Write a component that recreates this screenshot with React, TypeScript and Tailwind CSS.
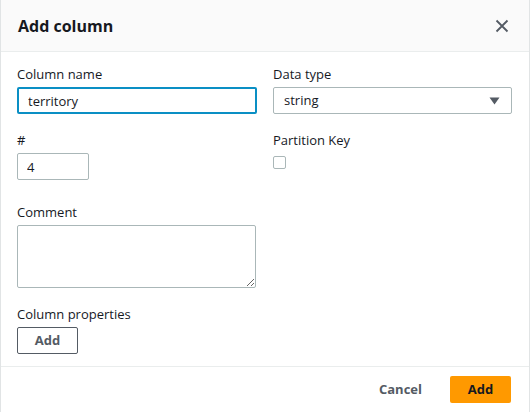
import React, { useState } from 'react';

const font = { fontFamily: '"Open Sans", "Noto Sans", Arial, sans-serif' };

const Label: React.FC<{ children: React.ReactNode }> = ({ children }) => (
  <div className="text-[13px] leading-[18px] text-[#16191f] mb-[4px]">{children}</div>
);

const App: React.FC = () => {
  const [name, setName] = useState('territory');
  const [num, setNum] = useState('4');
  const [partition, setPartition] = useState(false);

  return (
    <div className="w-[530px] h-[412px] bg-white overflow-hidden" style={font}>
      <div className="h-full border-x border-[#e1e4e5] flex flex-col">
        {/* header */}
        <div className="h-[52px] shrink-0 bg-[#fafafa] border-b border-[#eaeded] flex items-center justify-between pl-[17px] pr-[20px]">
          <h2 className="text-[16px] font-bold text-[#16191f] leading-none">Add column</h2>
          <button className="text-[#545b64]">
            <svg width="14" height="14" viewBox="0 0 14 14" fill="none" stroke="currentColor" strokeWidth="1.8">
              <path d="M1.5 1.5 L12.5 12.5 M12.5 1.5 L1.5 12.5" />
            </svg>
          </button>
        </div>

        {/* body */}
        <div className="flex-1 min-h-0 pl-[16px] pr-[18px] pt-[13px]">
          <div className="grid grid-cols-[240px_239px] gap-x-[16px]">
            <div>
              <Label>Column name</Label>
              <input
                value={name}
                onChange={e => setName(e.target.value)}
                className="w-[240px] h-[27px] border-2 border-[#0a8fc4] rounded-[2px] px-[9px] text-[13px] text-[#16191f] outline-none"
              />
            </div>
            <div>
              <Label>Data type</Label>
              <div className="w-[239px] h-[27px] border border-[#aab7b8] rounded-[2px] flex items-center justify-between pl-[10px] pr-[11px] text-[13px] text-[#16191f]">
                <span>string</span>
                <svg width="11" height="8" viewBox="0 0 11 8">
                  <path d="M0.5 0.5 H10.5 L5.5 7.5 Z" fill="#545b64" />
                </svg>
              </div>
            </div>

            <div className="mt-[17px]">
              <Label>#</Label>
              <input
                value={num}
                onChange={e => setNum(e.target.value)}
                className="w-[72px] h-[27px] border border-[#aab7b8] rounded-[2px] px-[9px] text-[13px] text-[#16191f] outline-none"
              />
            </div>
            <div className="mt-[17px]">
              <Label>Partition Key</Label>
              <button
                onClick={() => setPartition(!partition)}
                className={`block w-[13px] h-[13px] mt-[7px] border border-[#aab7b8] rounded-[2px] ${partition ? 'bg-[#0073bb]' : 'bg-white'}`}
              />
            </div>
          </div>

          <div className="mt-[23px]">
            <Label>Comment</Label>
            <textarea className="block w-[239px] h-[63px] border border-[#aab7b8] rounded-[2px] px-[9px] py-[4px] text-[13px] outline-none" />
          </div>

          <div className="mt-[17px]">
            <Label>Column properties</Label>
            <button className="w-[61px] h-[27px] border border-[#545b64] rounded-[2px] text-[13px] font-bold text-[#545b64] leading-none">
              Add
            </button>
          </div>
        </div>

        {/* footer */}
        <div className="h-[46px] shrink-0 border-t border-[#eaeded] flex items-center justify-end pr-[18px]">
          <button className="text-[13px] font-bold text-[#545b64] mr-[28px]">Cancel</button>
          <button className="w-[61px] h-[27px] bg-[#ff9900] rounded-[2px] text-[13px] font-bold text-[#16191f]">Add</button>
        </div>
      </div>
    </div>
  );
};

export default App;
